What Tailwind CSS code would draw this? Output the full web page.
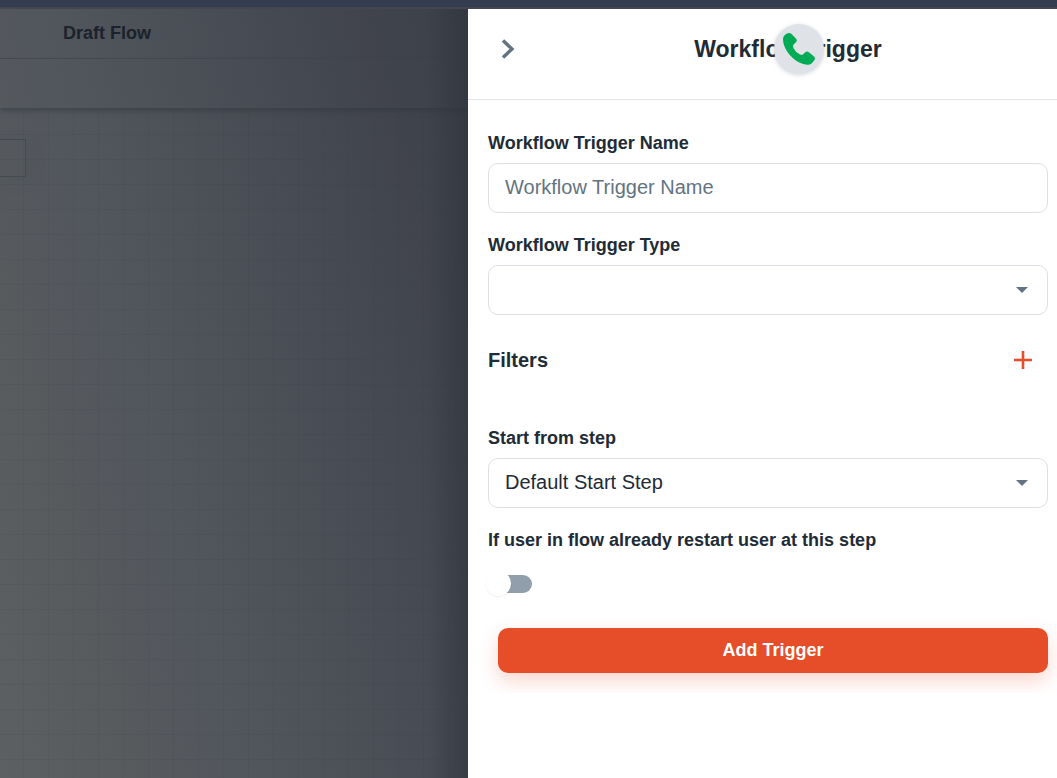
<!DOCTYPE html>
<html lang="en">
<head>
  <meta charset="UTF-8" />
  <meta name="viewport" content="width=device-width, initial-scale=1.0"/>
  <title>Workflow Trigger</title>
  <script src="https://cdn.jsdelivr.net/npm/@tailwindcss/browser@4"></script>
</head>
<body class="flex min-h-screen flex-col bg-[#4b4f57] font-['Liberation_Sans',Arial,sans-serif] text-[#212b36]">

  <div class="h-[9px] shrink-0 border-b-2 border-[#45464f] bg-[#343c4f]"></div>

  <div class="flex flex-1">

    <!-- Dimmed flow editor -->
    <main class="relative flex min-w-0 flex-1 flex-col bg-[linear-gradient(75deg,#5c6063_0%,#565a5d_22%,#52565d_36%,#484c54_64%,#41444c_84%,#3b4048_100%)]">
      <header class="flex h-[50px] items-center border-b border-[#41454c]/60 pb-0.5 pl-[63px]">
        <h1 class="text-[18px] leading-6 font-bold text-[#1b222b]">Draft Flow</h1>
      </header>
      <div class="h-[49px] shadow-[0_3px_5px_rgba(50,54,62,0.5)]"></div>
      <div class="flex-1 bg-[linear-gradient(to_right,rgba(50,56,66,0.1)_1px,transparent_1px),linear-gradient(to_bottom,rgba(50,56,66,0.1)_1px,transparent_1px)] bg-[length:25px_25px] bg-[position:23px_1px] pt-[31px]">
        <div class="h-[38px] w-[26px] border border-l-0 border-[#454950] shadow-[6px_4px_16px_rgba(60,64,72,0.1)]"></div>
      </div>
      <div class="pointer-events-none absolute inset-y-0 right-0 w-10 bg-linear-to-r from-transparent to-[#2f343c]/60"></div>
    </main>

    <!-- Trigger panel -->
    <aside class="relative w-[589px] max-w-full shrink-0 bg-white">
      <header class="flex h-[91px] items-center border-b border-[#e3e5e8] pr-[9px] pb-[10px] pl-5">
        <button type="button" aria-label="Close panel" class="flex size-10 items-center justify-center">
          <svg class="h-5 w-[14px]" viewBox="0 0 14 20" fill="none" stroke="#637381" stroke-width="3.4">
            <path d="M2 1.5 L11 10 L2 18.5"/>
          </svg>
        </button>
        <h2 class="flex-1 text-center text-[23px] leading-8 font-bold">Workflow Trigger</h2>
      </header>

      <button type="button" aria-label="Call" class="absolute top-[15px] left-[306px] flex size-[50px] items-center justify-center rounded-full bg-[#dfe3e8] shadow-[0_1px_4px_rgba(145,158,171,0.4)]">
        <svg class="size-8" viewBox="0 0 32 32" fill="#00ab55">
          <path d="M3.5 .8 Q6.5 -.8 8.8 1.2 L13.3 6 Q14.4 7.5 13.2 9 L10.6 11.5 Q9.6 13.2 10.6 15.2 Q12.6 19.4 16.6 21.2 Q18.6 22.2 20.2 21.2 L22.2 19.2 Q23.8 17.8 25.6 19.1 L31 23.6 Q32.6 25.3 31.4 27.2 L28.6 30.4 Q26.8 32 24 31.7 Q16.5 31 10 25.3 Q3 18.8 .8 11.5 Q-.3 7.5 .2 4.5 Q.8 2.4 3.5 .8 Z"/>
        </svg>
      </button>

      <form class="overflow-hidden pt-[31px] pr-[9px] pb-5 pl-5">
        <div class="flex flex-col gap-5">
          <div class="flex flex-col gap-2">
            <label for="triggerName" class="text-[18px] leading-6 font-bold">Workflow Trigger Name</label>
            <input id="triggerName" type="text" placeholder="Workflow Trigger Name" class="h-[50px] w-full rounded-[10px] border border-[#dcdfe4] px-4 pb-0.5 text-[20px] outline-none placeholder:text-[#637381]">
          </div>

          <div class="flex flex-col gap-2">
            <label for="triggerType" class="text-[18px] leading-6 font-bold">Workflow Trigger Type</label>
            <div class="relative">
              <select id="triggerType" class="block h-[50px] w-full appearance-none rounded-[10px] border border-[#dcdfe4] px-4 pb-0.5 text-[20px] outline-none">
                <option value=""></option>
              </select>
              <svg class="pointer-events-none absolute top-[22px] right-5 h-[6px] w-3" viewBox="0 0 12 6" fill="#637381"><path d="M0 0h12L6 6z"/></svg>
            </div>
          </div>

          <div class="flex h-[50px] items-center justify-between pr-4">
            <h3 class="text-[20px] leading-6 font-bold">Filters</h3>
            <button type="button" aria-label="Add filter">
              <svg class="size-[18px]" viewBox="0 0 18 18" fill="none" stroke="#e54e28" stroke-width="2.6"><path d="M9 0v18M0 9h18"/></svg>
            </button>
          </div>
        </div>

        <div class="mt-[41px] flex flex-col gap-5">
          <div class="flex flex-col gap-2">
            <label for="startStep" class="text-[18px] leading-6 font-bold">Start from step</label>
            <div class="relative">
              <select id="startStep" class="block h-[50px] w-full appearance-none rounded-[10px] border border-[#dcdfe4] px-4 pb-0.5 text-[20px] outline-none">
                <option>Default Start Step</option>
              </select>
              <svg class="pointer-events-none absolute top-[22px] right-5 h-[6px] w-3" viewBox="0 0 12 6" fill="#637381"><path d="M0 0h12L6 6z"/></svg>
            </div>
          </div>

          <div class="flex flex-col items-start gap-5">
            <label for="restartUser" class="text-[18px] leading-6 font-bold">If user in flow already restart user at this step</label>
            <input id="restartUser" type="checkbox" role="switch" class="relative my-[3px] h-[18px] w-11 appearance-none rounded-full bg-[#919eab] before:absolute before:-top-1 before:-left-[2px] before:size-[25px] before:rounded-full before:bg-white before:shadow-[0_1px_2px_rgba(0,0,0,0.07)] checked:bg-[#e54e28] checked:before:left-5">
          </div>
        </div>

        <button type="submit" class="mt-8 ml-[10px] block h-[45px] w-[calc(100%-10px)] rounded-[10px] bg-[#e54e28] text-[18px] font-bold text-white shadow-[0_8px_20px_rgba(229,78,40,0.24)]">Add Trigger</button>
      </form>
    </aside>
  </div>

</body>
</html>
